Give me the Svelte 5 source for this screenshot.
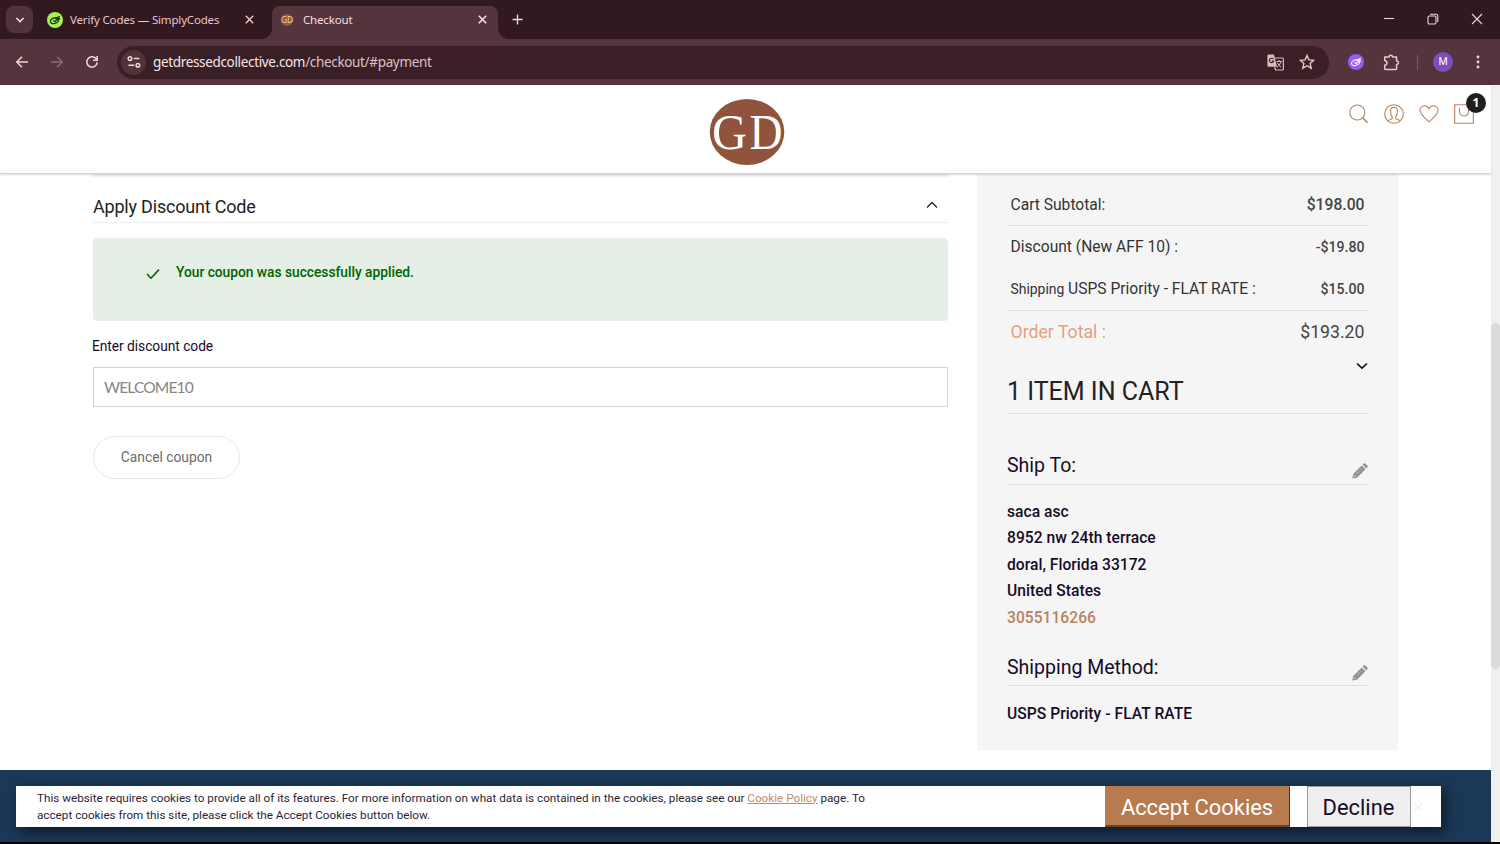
<script lang="ts">
	let couponCode = $state('WELCOME10');

	const address = ['saca asc', '8952 nw 24th terrace', 'doral, Florida 33172', 'United States'];
</script>

{#snippet pencil()}
	<svg class="pencil" width="16" height="16" viewBox="0 0 16 16">
		<path fill="#929292" d="M.3 15.6 1.2 10.9 9.7 2.4 13.5 6.2 5 14.7ZM10.5 1.6 11.7.5Q12.5-.2 13.3.5L15.4 2.6Q16.1 3.4 15.4 4.2L14.3 5.4Z" />
		<path d="M1.8 12.4 3.6 14.2" stroke="#f5f5f5" stroke-width=".8" fill="none" />
		<path d="M4.4 10.8 9.6 5.6" stroke="#c4c4c4" stroke-width=".7" fill="none" />
	</svg>
{/snippet}

{#snippet mark()}
	<ellipse cx="7.4" cy="8.7" rx="4" ry="2.7" transform="rotate(-18 7.4 8.7)" />
	<path d="M6.4 8.2 8 9.7 12.3 5.2M8 6.6 12.8 4.3M10.8 8.2 13 6.5" />
{/snippet}

<div class="window">
	<div class="tabstrip">
		<button class="tab-search" aria-label="Search tabs">
			<svg width="10" height="10" viewBox="0 0 10 10"><path d="m1.4 3 3.6 3.6L8.6 3" fill="none" stroke="#f6dce2" stroke-width="1.6" /></svg>
		</button>
		<div class="tab">
			<svg width="16" height="16" viewBox="0 0 16 16">
				<circle cx="8" cy="8" r="8" fill="#a5f34b" />
				<g fill="none" stroke="#20351a" stroke-width="1.3">{@render mark()}</g>
			</svg>
			<span class="tab-title">Verify Codes — SimplyCodes</span>
			<svg class="x" width="9" height="9" viewBox="0 0 9 9"><path d="m.8.8 7.4 7.4m0-7.4L.8 8.2" stroke="#e9c9d0" stroke-width="1.4" /></svg>
		</div>
		<div class="tab active">
			<span class="gd-icon">GD</span>
			<span class="tab-title">Checkout</span>
			<svg class="x" width="9" height="9" viewBox="0 0 9 9"><path d="m.8.8 7.4 7.4m0-7.4L.8 8.2" stroke="#fbe6ea" stroke-width="1.5" /></svg>
		</div>
		<svg class="new-tab" width="11" height="11" viewBox="0 0 11 11"><path d="M5.5.5v10M.5 5.5h10" stroke="#f3d5db" stroke-width="1.4" /></svg>
		<div class="window-buttons">
			<svg width="12" height="12" viewBox="0 0 12 12"><path d="M1 5.5h10" /></svg>
			<svg width="12" height="12" viewBox="0 0 12 12"><rect x="1" y="3" width="8" height="8" rx="1.2" /><path d="M3 1.3h6.2q1.6 0 1.6 1.6V9" /></svg>
			<svg width="12" height="12" viewBox="0 0 12 12"><path d="m1 1 10 10m0-10L1 11" /></svg>
		</div>
	</div>

	<div class="toolbar">
		<div class="nav">
			<svg width="14" height="14" viewBox="0 0 14 14"><path d="M13 7H2M7 1.8 1.8 7 7 12.2" /></svg>
			<svg class="dim" width="14" height="14" viewBox="0 0 14 14"><path d="M1 7h11M7 1.8 12.2 7 7 12.2" /></svg>
			<svg width="14" height="14" viewBox="0 0 14 14"><path d="M11.4 4.2A5.2 5.2 0 1 0 12.2 7.4M12.2 1v4.2H8" /></svg>
		</div>
		<div class="omnibox">
			<span class="site-info">
				<svg width="14" height="14" viewBox="0 0 14 14"><circle cx="3" cy="3.6" r="1.8" /><path d="M6.8 3.6h5.6M1.4 10.2h5.8" /><circle cx="10.9" cy="10.2" r="1.8" /></svg>
			</span>
			<span class="url">getdressedcollective.com<span>/checkout/#payment</span></span>
			<svg class="translate" width="17" height="17" viewBox="0 0 17 17">
				<path d="M8 4h7.5q.9 0 .9.9v10.2q0 .9-.9.9H8.6L7.6 13" fill="none" stroke="#d8b9c0" stroke-width="1.2" />
				<path d="M9.5 7.5H15M12 6v1.5M14 7.7q-1.2 4-4 5.6M10.4 8.8q1.4 3 3.8 4.4" fill="none" stroke="#d8b9c0" stroke-width="1" />
				<path d="M1.4.4h5.5l3.2 12.3H1.4q-1 0-1-1V1.4q0-1 1-1Z" fill="#d8b9c0" />
				<path d="M6.3 5A2.2 2.2 0 1 0 6.7 7H4.7" fill="none" stroke="#3a2026" stroke-width="1.1" />
			</svg>
			<svg class="star" width="16" height="16" viewBox="0 0 16 16"><path d="m8 1.5 1.9 4.4 4.8.4-3.6 3.2 1.1 4.7L8 11.7l-4.2 2.5 1.1-4.7L1.3 6.3l4.8-.4Z" fill="none" stroke="#e5c8ce" stroke-width="1.4" /></svg>
		</div>
		<svg class="ext" width="16" height="16" viewBox="0 0 16 16">
			<circle cx="8" cy="8" r="8" fill="#955cf2" />
			<g fill="none" stroke="#f2eafe" stroke-width="1.2">{@render mark()}</g>
		</svg>
		<svg class="puzzle" width="17" height="17" viewBox="0 0 17 17"><path d="M1.7 3H6a1.8 1.8 0 0 1 3.6 0h4v4a1.8 1.8 0 0 1 0 3.6v4.2q0 .7-.7.7H2.4q-.7 0-.7-.7v-3.6q2.2-.3 2.2-2.3T1.7 6.6Z" fill="none" stroke="#e5c8ce" stroke-width="1.5" stroke-linejoin="round" /></svg>
		<span class="divider"></span>
		<span class="avatar">M</span>
		<svg class="dots" width="4" height="14" viewBox="0 0 4 14"><circle cx="2" cy="2" r="1.4" /><circle cx="2" cy="7" r="1.4" /><circle cx="2" cy="12" r="1.4" /></svg>
	</div>

	<div class="viewport">
		<div class="page">
			<header>
				<svg class="logo" width="76" height="68" viewBox="0 0 76 68">
					<ellipse cx="38" cy="34" rx="37.3" ry="33" fill="#91533c" />
					<text x="3" y="51" textLength="35" lengthAdjust="spacingAndGlyphs">G</text>
					<text x="40.5" y="51" textLength="33" lengthAdjust="spacingAndGlyphs">D</text>
				</svg>
				<div class="header-icons">
					<svg width="20" height="20" viewBox="0 0 20 20"><circle cx="8.3" cy="8.5" r="7.5" /><path d="m13.6 13.8 5 5" stroke-width="1.6" /></svg>
					<svg width="20" height="20" viewBox="0 0 20 20"><circle cx="10" cy="10" r="9.3" /><path d="M4.2 17.1q.6-1.5 3.1-1.9 1.3-.3.9-2.2Q6.6 11 6.5 7.3 6.5 3.2 10 3.2t3.5 4.1Q13.4 11 11.8 13q-.4 1.9.9 2.2 2.5.4 3.1 1.9" /></svg>
					<svg width="20" height="20" viewBox="0 0 21 20"><path d="M10.5 18.2C5 13.2 1 10 1 6 1 1.4 7.8-.8 10.5 4.5 13.2-.8 20 1.4 20 6c0 4-4 7.2-9.5 12.2Z" /></svg>
					<div class="bag">
						<svg width="20" height="20" viewBox="0 0 20 20"><path d="M.7.7h18.6v18.6H.7ZM5.5 4v3q0 5 4.5 5t4.5-5V4" /></svg>
						<span class="count">1</span>
					</div>
				</div>
			</header>

			<main>
				<section class="discount">
					<div class="discount-title">
						<h2>Apply Discount Code</h2>
						<svg width="12" height="8" viewBox="0 0 12 8"><path d="m1 6.5 5-5 5 5" fill="none" stroke="#222" stroke-width="1.3" /></svg>
					</div>
					<div class="message">
						<svg width="14" height="12" viewBox="0 0 14 12"><path d="m1 6 4 4.2L13 1.6" fill="none" stroke="#006400" stroke-width="1.6" /></svg>
						<span>Your coupon was successfully applied.</span>
					</div>
					<label for="code">Enter discount code</label>
					<input id="code" type="text" bind:value={couponCode} />
					<button class="cancel">Cancel coupon</button>
				</section>

				<aside>
					<div class="row subtotal"><span>Cart Subtotal:</span><strong>$198.00</strong></div>
					<div class="row"><span>Discount (New AFF 10) :</span><strong>-$19.80</strong></div>
					<div class="row shipping"><span><small>Shipping</small> USPS Priority - FLAT RATE :</span><strong>$15.00</strong></div>
					<div class="row total"><span>Order Total :</span><span class="amount">$193.20</span></div>
					<div class="items">
						<h3>1 ITEM IN CART</h3>
						<svg width="12" height="8" viewBox="0 0 12 8"><path d="m1 1.5 5 4.7 5-4.7" fill="none" stroke="#160c28" stroke-width="1.7" /></svg>
					</div>
					<div class="info-title ship-to"><h4>Ship To:</h4>{@render pencil()}</div>
					<div class="address">
						{#each address as line}
							<div>{line}</div>
						{/each}
						<div class="phone">3055116266</div>
					</div>
					<div class="info-title method"><h4>Shipping Method:</h4>{@render pencil()}</div>
					<div class="method-name">USPS Priority - FLAT RATE</div>
				</aside>
			</main>

			<footer></footer>

			<div class="cookies">
				<p>
					This website requires cookies to provide all of its features. For more information on what data is contained in the cookies, please see our <span class="policy">Cookie Policy</span> page. To<br />
					accept cookies from this site, please click the Accept Cookies button below.
				</p>
				<button class="accept">Accept Cookies</button>
				<button class="decline">Decline</button>
				<svg class="dismiss" width="10" height="10" viewBox="0 0 10 10"><path d="m1 1 8 8m0-8L1 9" stroke="#f0f0f3" stroke-width="1.2" /></svg>
			</div>
		</div>
		<div class="scrollbar"><div class="thumb"></div></div>
	</div>
	<div class="bottom-edge"></div>
</div>

<style>
	:global(body) {
		margin: 0;
		overflow: hidden;
	}

	.window {
		width: 1500px;
		height: 844px;
		display: flex;
		flex-direction: column;
		background: #fff;
		font-family: Roboto, 'Liberation Sans', sans-serif;
		overflow: hidden;
	}

	svg {
		display: block;
		flex: none;
	}

	h2, h3, h4, p {
		margin: 0;
		font-weight: 400;
	}

	button {
		font-family: inherit;
		padding: 0;
		box-sizing: border-box;
	}

	/* browser chrome */
	.tabstrip {
		height: 39px;
		flex: none;
		display: flex;
		background: #32191f;
		font-family: 'Noto Sans', sans-serif;
		font-size: 11.5px;
		letter-spacing: -0.17px;
		color: #e8c6ce;
	}

	.tab-search {
		width: 27px;
		height: 27px;
		margin: 6px 0 0 6px;
		border: 0;
		border-radius: 8px;
		background: #51333b;
		display: grid;
		place-items: center;
	}

	.tab {
		width: 211px;
		height: 27px;
		margin-top: 6px;
		padding-left: 14px;
		display: flex;
		align-items: center;
		white-space: nowrap;
	}

	.tab-title {
		margin-left: 7px;
	}

	.x {
		margin-left: auto;
		margin-right: 4px;
	}

	.tab.active {
		position: relative;
		width: 217px;
		height: 33px;
		margin-left: 14px;
		padding-left: 9px;
		background: #54353d;
		border-radius: 8px 8px 0 0;
		color: #f8dfe4;
	}

	.tab.active > * {
		transform: translateY(-3px);
	}

	.tab.active .x {
		margin-right: 11px;
	}

	.tab.active::before,
	.tab.active::after {
		content: '';
		position: absolute;
		bottom: 0;
		width: 10px;
		height: 10px;
	}

	.tab.active::before {
		left: -10px;
		background: radial-gradient(circle at 0 0, transparent 9.5px, #54353d 10px);
	}

	.tab.active::after {
		right: -10px;
		background: radial-gradient(circle at 100% 0, transparent 9.5px, #54353d 10px);
	}

	.gd-icon {
		width: 12px;
		height: 12px;
		border-radius: 50%;
		background: #95593c;
		color: #f0cbb5;
		font-size: 8.5px;
		line-height: 12px;
		display: flex;
		justify-content: center;
	}

	.tab.active .tab-title {
		margin-left: 10px;
	}

	.new-tab {
		margin: 14px 0 0 14px;
	}

	.window-buttons {
		display: flex;
		gap: 32px;
		margin: 13px 17px 0 auto;
		fill: none;
		stroke: #e9d8dc;
		stroke-width: 1.1;
	}

	.toolbar {
		height: 46px;
		flex: none;
		display: flex;
		align-items: center;
		background: #54353d;
	}

	.nav {
		display: flex;
		gap: 21px;
		margin-left: 15px;
		fill: none;
		stroke: #f3d5db;
		stroke-width: 1.5;
	}

	.dim {
		stroke: #8b6b74;
	}

	.omnibox {
		width: 1212px;
		height: 33px;
		margin-left: 18px;
		border-radius: 17px;
		background: #3a2026;
		display: flex;
		align-items: center;
		font-family: 'Noto Sans', sans-serif;
		font-size: 13.5px;
		letter-spacing: -0.34px;
		color: #f5e6e9;
	}

	.site-info {
		width: 25px;
		height: 25px;
		margin-left: 4px;
		border-radius: 50%;
		background: #51333b;
		display: grid;
		place-items: center;
		fill: none;
		stroke: #f3d5db;
		stroke-width: 1.5;
	}

	.url {
		margin-left: 7px;
	}

	.url span {
		color: #dcc0c6;
	}

	.translate {
		margin-left: auto;
	}

	.star {
		margin: 0 14px 0 15px;
	}

	.ext {
		margin-left: 19px;
	}

	.puzzle {
		margin-left: 19px;
	}

	.divider {
		width: 1px;
		height: 15px;
		margin-left: 17px;
		background: #7a5962;
	}

	.avatar {
		width: 20px;
		height: 20px;
		margin-left: 15px;
		border-radius: 50%;
		background: #7b50bd;
		color: #fff;
		font-size: 10.5px;
		line-height: 20px;
		text-align: center;
	}

	.dots {
		margin-left: 23px;
		fill: #f3d5db;
	}

	/* page */
	.viewport {
		display: flex;
		height: 757px;
		flex: none;
	}

	.page {
		position: relative;
		width: 1491px;
		height: 757px;
		display: flex;
		flex-direction: column;
	}

	.scrollbar {
		width: 9px;
		background: #f0f0f0;
		padding-top: 238px;
		box-sizing: border-box;
	}

	.thumb {
		height: 346px;
		border-radius: 5px;
		background: #dbdbdb;
	}

	.bottom-edge {
		height: 2px;
		background: #000;
	}

	header {
		position: relative;
		z-index: 1;
		height: 88px;
		flex: none;
		background: #fff;
		border-bottom: 1px solid #d2d2d2;
		box-shadow: 0 1px 2px rgba(0, 0, 0, 0.15);
		display: flex;
		justify-content: space-between;
	}

	.logo {
		margin: 13px 0 0 709px;
		overflow: visible;
	}

	.logo text {
		font-family: 'Liberation Serif', serif;
		font-size: 50px;
		fill: #fff;
	}

	.header-icons {
		display: flex;
		gap: 15px;
		margin: 19px 17px 0 0;
		fill: none;
		stroke: #bb8062;
		stroke-width: 1.1;
	}

	.bag {
		position: relative;
	}

	.count {
		position: absolute;
		left: 12px;
		top: -11px;
		width: 20px;
		height: 20px;
		border-radius: 50%;
		background: #1f1f1f;
		color: #fff;
		font: 700 12px/20px 'Open Sans', sans-serif;
		text-align: center;
	}

	main {
		display: flex;
		height: 596px;
		flex: none;
	}

	.discount {
		width: 855px;
		margin-left: 93px;
		display: flex;
		flex-direction: column;
		align-items: flex-start;
	}

	.discount-title {
		width: 100%;
		height: 49px;
		box-sizing: border-box;
		border-top: 3px solid #f2f2f2;
		border-bottom: 1px solid #ededed;
		display: flex;
		justify-content: space-between;
		padding-right: 10px;
	}

	h2 {
		margin-top: 18px;
		font-size: 18px;
		line-height: 24px;
		letter-spacing: -0.2px;
		color: #222;
	}

	.discount-title svg {
		margin-top: 24px;
	}

	.message {
		width: 100%;
		height: 83px;
		margin-top: 15px;
		padding: 25px 0 0 53px;
		box-sizing: border-box;
		border-radius: 4px;
		background: #e5efe5;
		display: flex;
		gap: 16px;
		color: #006400;
		font-size: 13.8px;
		font-weight: 500;
		letter-spacing: -0.03px;
		line-height: 18px;
	}

	.message svg {
		margin-top: 5px;
	}

	label {
		margin: 16px 0 0 -1px;
		font-size: 13.8px;
		line-height: 18px;
		letter-spacing: -0.05px;
		color: #160c28;
	}

	input {
		width: 100%;
		height: 40px;
		margin: 12px 0 0;
		padding: 0 10px 1px;
		box-sizing: border-box;
		border: 1px solid #d4d4d4;
		border-radius: 0;
		font: 15.6px Lato, sans-serif;
		letter-spacing: -0.9px;
		color: #858585;
		background: #fff;
	}

	.cancel {
		width: 147px;
		height: 43px;
		margin-top: 29px;
		padding-bottom: 2px;
		border: 1px solid #e8e8e8;
		border-radius: 22px;
		background: #fff;
		font-size: 13.8px;
		color: #6b6b6b;
	}

	aside {
		width: 361px;
		height: 576px;
		margin-left: 29px;
		padding: 0 30px;
		background: #f5f5f5;
		color: #333;
		font-size: 15.6px;
	}

	.row {
		height: 42px;
		padding: 0 3.5px;
		display: flex;
		align-items: center;
		justify-content: space-between;
		white-space: nowrap;
	}

	.row strong {
		font-size: 14.1px;
		font-weight: 500;
		color: #444;
	}

	.row.subtotal {
		height: 41px;
		padding-top: 10px;
		border-bottom: 1px solid #ddd;
	}

	.row.subtotal strong {
		font-size: 15.7px;
	}

	.row small {
		font-size: 13.9px;
	}

	.shipping {
		border-bottom: 1px solid #ddd;
	}

	.row.total {
		height: 41px;
		padding-bottom: 2px;
		font-size: 17.7px;
		color: #e5a080;
	}

	.amount {
		color: #444;
	}

	.items {
		height: 59px;
		display: flex;
		justify-content: space-between;
		border-bottom: 1px solid #ddd;
	}

	h3 {
		margin-top: 22px;
		font-size: 25px;
		line-height: 32px;
		color: #222;
	}

	.items svg {
		margin-top: 8px;
	}

	.info-title {
		display: flex;
		justify-content: space-between;
		align-items: flex-end;
		border-bottom: 1px solid #ddd;
		color: #160c28;
	}

	.ship-to {
		height: 70px;
	}

	h4 {
		font-size: 19.5px;
		line-height: 24px;
		margin-bottom: 6px;
	}

	.method h4 {
		margin-bottom: 5px;
	}

	.pencil {
		margin-bottom: 5px;
	}

	.method .pencil {
		margin-bottom: 4px;
	}

	.address {
		padding-top: 14px;
		font-weight: 500;
		line-height: 26.45px;
		letter-spacing: 0.03px;
		color: #160c28;
	}

	.phone {
		color: #b9825f;
	}

	.method {
		height: 54px;
	}

	.method-name {
		margin-top: 17px;
		line-height: 22px;
		font-weight: 500;
		letter-spacing: 0.06px;
		color: #160c28;
	}

	footer {
		flex: 1;
		background: #1b3857;
	}

	.cookies {
		position: absolute;
		left: 16px;
		top: 701px;
		width: 1425px;
		height: 41px;
		display: flex;
		background: #fff;
		box-shadow: 4px 5px 12px rgba(0, 0, 0, 0.55);
	}

	.cookies p {
		width: 1067px;
		padding: 3.5px 0 0 21px;
		font-size: 11.715px;
		line-height: 17.4px;
		color: #2a1f35;
		white-space: nowrap;
	}

	.cookies p + button {
		margin-left: 0.5px;
	}

	.policy {
		color: #c48a68;
		text-decoration: underline;
	}

	.cookies button {
		height: 41px;
		font-size: 21.9px;
		white-space: nowrap;
	}

	.accept {
		width: 185px;
		padding-top: 2px;
		border: 1px solid #b87b50;
		border-right: 1px solid #553018;
		border-bottom: 2px solid #70421f;
		background: #b87b50;
		color: #fff;
	}

	.decline {
		width: 104px;
		padding-top: 2px;
		margin-left: 17px;
		border: 1px solid #9a9a9a;
		background: #efeff0;
		color: #160c28;
	}

	.dismiss {
		margin: 16px 0 0 2px;
	}
</style>
